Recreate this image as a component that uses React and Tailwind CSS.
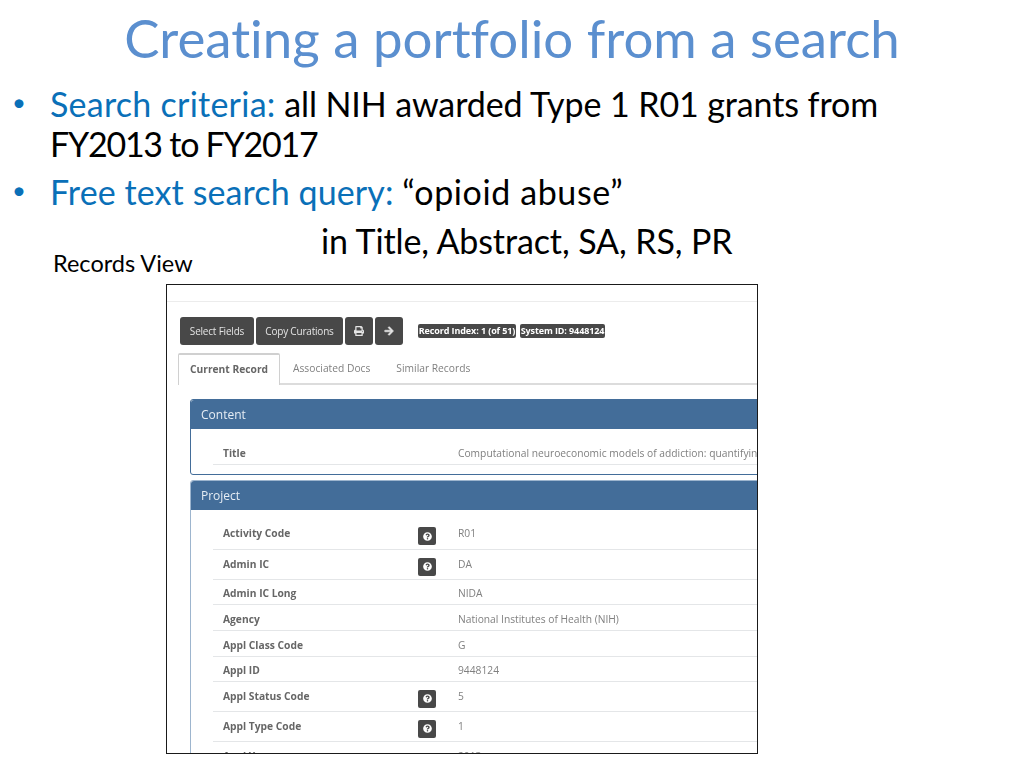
import { FaArrowRight, FaPrint, FaQuestionCircle } from "react-icons/fa";

const ROWS = [
  { label: "Activity Code", value: "R01", help: true, height: "h-[31px]" },
  { label: "Admin IC", value: "DA", help: true, height: "h-[30px]" },
  { label: "Admin IC Long", value: "NIDA", height: "h-[25px]" },
  { label: "Agency", value: "National Institutes of Health (NIH)", height: "h-[26px]" },
  { label: "Appl Class Code", value: "G", height: "h-[26px]" },
  { label: "Appl ID", value: "9448124", height: "h-[25px]" },
  { label: "Appl Status Code", value: "5", help: true, height: "h-[30px]" },
  { label: "Appl Type Code", value: "1", help: true, height: "h-[30px]" },
  { label: "Appl Year", value: "2013", height: "h-[26px]" },
];

function ToolButton({ className, children }) {
  return (
    <button className={`flex h-[28px] items-center justify-center rounded-[3px] bg-[#484848] text-[10px] tracking-[-0.2px] text-[#e4e4e4] ${className}`}>
      {children}
    </button>
  );
}

function Badge({ className, children }) {
  return (
    <span className={`flex h-[14px] items-center justify-center rounded-[2px] bg-[#484848] text-[9px] font-bold tracking-[-0.1px] text-white ${className}`}>
      {children}
    </span>
  );
}

function Row({ label, value, help, height }) {
  return (
    <div className={`flex items-center border-b border-[#e4e6e8] pl-[10px] text-[10.25px] ${height} ${help ? "" : "pt-[4px]"}`}>
      <span className="w-[195px] font-bold text-[#666]">{label}</span>
      <span className="flex w-[40px] items-center">
        {help && (
          <span className="mt-[4px] flex h-[18px] w-[18px] items-center justify-center rounded-[2px] bg-[#484848] text-white">
            <FaQuestionCircle size={9} />
          </span>
        )}
      </span>
      <span className="text-[#808080]">{value}</span>
    </div>
  );
}

function SectionHeader({ children }) {
  return (
    <div className="flex h-[29px] items-center rounded-t-[3px] bg-[#436d99] pl-[10px] text-[12px] text-[#e6edf4]">
      {children}
    </div>
  );
}

function Bullet() {
  return <span className="absolute -left-[38px] -top-[2px] text-[24px] text-[#0a70b8]">•</span>;
}

function RecordsPanel() {
  return (
    <div className="ml-[166px] h-[470px] w-[592px] overflow-hidden border border-[#1a1a1a] bg-white font-['Open_Sans',sans-serif] blur-[0.3px]">
      <div className="h-[17px] border-b border-[#ececec]" />
      <div className="flex items-center pl-[13px] pt-[15px]">
        <div className="flex gap-[2px]">
          <ToolButton className="w-[74px]">Select Fields</ToolButton>
          <ToolButton className="w-[87px]">Copy Curations</ToolButton>
          <ToolButton className="w-[28px]"><FaPrint size={10} /></ToolButton>
          <ToolButton className="w-[28px]"><FaArrowRight size={10} stroke="currentColor" strokeWidth={30} /></ToolButton>
        </div>
        <div className="ml-[15px] flex gap-[4px]">
          <Badge className="w-[98px]">Record Index: 1 (of 51)</Badge>
          <Badge className="w-[85px]">System ID: 9448124</Badge>
        </div>
      </div>
      <div className="ml-[11px] mt-[8px] flex h-[32px] border-b-2 border-[#dcdcdc] text-[10.25px] text-[#808080]">
        <div className="-mb-[2px] flex w-[102px] items-center justify-center rounded-t-[2px] border-x border-t-2 border-[#d0d0d0] border-b-0 bg-white font-bold text-[#666]">
          Current Record
        </div>
        <div className="ml-[13px] flex items-center pt-[2px]">Associated Docs</div>
        <div className="ml-[26px] flex items-center pt-[2px]">Similar Records</div>
      </div>
      <div className="ml-[23px] mt-[14px] w-[600px]">
        <div className="h-[76px] rounded-[3px] border border-[#436d99]">
          <SectionHeader>Content</SectionHeader>
          <div className="pl-[22px] pt-[15px]">
            <div className="flex h-[21px] items-start border-b border-[#e4e6e8] pl-[10px] pt-[2px] text-[10.25px]">
              <span className="w-[235px] font-bold text-[#666]">Title</span>
              <span className="whitespace-nowrap text-[#808080]">Computational neuroeconomic models of addiction: quantifying</span>
            </div>
          </div>
        </div>
        <div className="mt-[5px] rounded-[3px] border border-[#9db5ce]">
          <SectionHeader>Project</SectionHeader>
          <div className="pl-[22px] pt-[9px]">
            {ROWS.map((row) => (
              <Row key={row.label} {...row} />
            ))}
          </div>
        </div>
      </div>
    </div>
  );
}

export default function App() {
  return (
    <div className="h-[768px] w-[1024px] overflow-hidden bg-white font-['Lato',sans-serif] text-black [font-variant-ligatures:none]">
      <h1 className="h-[84px] pt-[6px] text-center text-[52.8px] leading-[64px] text-[#5b8fcf]">
        Creating a portfolio from a search
      </h1>
      <ul className="pl-[50px] text-[34px] leading-[40px]">
        <li className="relative">
          <Bullet />
          <span className="tracking-[0.25px] text-[#0a70b8]">Search criteria:</span>{" "}
          <span className="tracking-[-0.1px]">all NIH awarded Type 1 R01 grants from</span>
          <br />
          <span className="tracking-[-1.25px]">FY2013 to FY2017</span>
        </li>
        <li className="relative mt-[8px]">
          <Bullet />
          <span className="tracking-[0.1px] text-[#0a70b8]">Free text search query:</span>{" "}
          <span className="tracking-[0.6px]">“opioid abuse”</span>
        </li>
      </ul>
      <div className="flex h-[64px] items-end pl-[53px]">
        <span className="w-[268px] text-[23.5px] leading-[26px]">Records View</span>
        <span className="mb-[15px] text-[34px] leading-[40px] tracking-[-0.1px]">in Title, Abstract, SA, RS, PR</span>
      </div>
      <div className="mt-[8px]">
        <RecordsPanel />
      </div>
    </div>
  );
}
